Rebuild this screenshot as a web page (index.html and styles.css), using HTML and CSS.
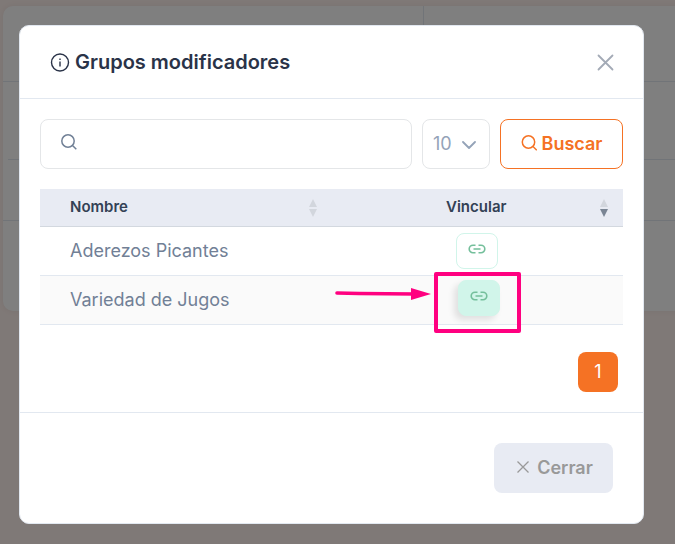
FILE: index.html
```html
<!DOCTYPE html>
<html lang="es">
<head>
    <meta charset="UTF-8">
    <meta name="viewport" content="width=device-width, initial-scale=1.0">
    <title>Grupos modificadores</title>
    <link rel="stylesheet" href="styles.css">
</head>
<body>
    <div class="page" aria-hidden="true">
        <div class="page-card">
            <div class="page-top"><div class="page-side"></div></div>
            <div class="page-tools"></div>
            <div class="page-row"></div>
        </div>
    </div>

    <div class="backdrop">
        <div class="modal" role="dialog" aria-labelledby="modal-title">
            <div class="modal-header">
                <h5 class="modal-title" id="modal-title">
                    <svg class="icon-info" viewBox="0 0 20 20" fill="none" stroke="currentColor" stroke-width="1.4">
                        <circle cx="10" cy="10.500" r="8.5"/>
                        <path d="M10 9.500v5M10 6.500V8"/>
                    </svg>
                    Grupos modificadores
                </h5>
                <button type="button" class="btn-close" aria-label="Cerrar ventana">
                    <svg viewBox="0 0 16 16" fill="none" stroke="currentColor" stroke-width="1.8" stroke-linecap="round">
                        <path d="M1.500 1.500l14 14M15.500 1.500l-14 14"/>
                    </svg>
                </button>
            </div>

            <div class="modal-body">
                <form class="filters">
                    <div class="search">
                        <svg class="icon-search" viewBox="0 0 16 16" fill="none" stroke="currentColor" stroke-width="1.5">
                            <circle cx="7" cy="7" r="6.2"/>
                            <path d="M11.5 11.5l3.8 3.8"/>
                        </svg>
                        <input type="text" class="search-input" aria-label="Buscar grupo">
                    </div>
                    <div class="length">
                        <select class="length-select" aria-label="Registros por página">
                            <option>10</option>
                            <option>25</option>
                            <option>50</option>
                        </select>
                        <svg class="icon-chevron" viewBox="0 0 14 8" fill="none" stroke="currentColor" stroke-width="1.8" stroke-linecap="round" stroke-linejoin="round">
                            <path d="M1 1l6 6 6-6"/>
                        </svg>
                    </div>
                    <button type="button" class="btn btn-search">
                        <svg class="icon-search" viewBox="0 0 16 16" fill="none" stroke="currentColor" stroke-width="1.5">
                            <circle cx="7.500" cy="7" r="6.2"/>
                            <path d="M12 11.5l3.8 3.8"/>
                        </svg>
                        Buscar
                    </button>
                </form>

                <table class="table">
                    <thead>
                        <tr>
                            <th>
                                <div class="th-inner">
                                    <span>Nombre</span>
                                    <svg class="sort" viewBox="0 0 8 18">
                                        <path class="sort-arrow" d="M4 0l4 8H0z"/>
                                        <path class="sort-arrow" d="M4 18l4-8H0z"/>
                                    </svg>
                                </div>
                            </th>
                            <th class="center">
                                <div class="th-inner">
                                    <span>Vincular</span>
                                    <svg class="sort" viewBox="0 0 8 18">
                                        <path class="sort-arrow" d="M4 0l4 8H0z"/>
                                        <path class="sort-arrow active" d="M4 18l4-8H0z"/>
                                    </svg>
                                </div>
                            </th>
                        </tr>
                    </thead>
                    <tbody>
                        <tr>
                            <td>Aderezos Picantes</td>
                            <td class="center">
                                <button type="button" class="btn-link" aria-label="Vincular Aderezos Picantes">
                                    <svg class="icon-link" viewBox="0 0 18 10" fill="none" stroke="currentColor" stroke-width="1.6">
                                        <path d="M7.5 1.2H5a3.8 3.8 0 0 0 0 7.6h2.5M10.5 1.2H13a3.8 3.8 0 0 1 0 7.6h-2.5M5.5 5h7"/>
                                    </svg>
                                </button>
                            </td>
                        </tr>
                        <tr>
                            <td>Variedad de Jugos</td>
                            <td class="center marked">
                                <button type="button" class="btn-link hover" aria-label="Vincular Variedad de Jugos">
                                    <svg class="icon-link" viewBox="0 0 18 10" fill="none" stroke="currentColor" stroke-width="1.6">
                                        <path d="M7.5 1.2H5a3.8 3.8 0 0 0 0 7.6h2.5M10.5 1.2H13a3.8 3.8 0 0 1 0 7.6h-2.5M5.5 5h7"/>
                                    </svg>
                                </button>
                                <!-- flecha y recuadro que señalan el botón -->
                                <svg class="mark" viewBox="0 0 190 64">
                                    <path d="M4 23L26 23.500L82 24" fill="none" stroke="#ff0080" stroke-width="3.600" stroke-linecap="round"/>
                                    <path d="M78 18l20 6-20 6z" fill="#ff0080"/>
                                    <rect x="103" y="4" width="83" height="57" fill="none" stroke="#ff0080" stroke-width="4" stroke-linejoin="round"/>
                                </svg>
                            </td>
                        </tr>
                    </tbody>
                </table>

                <nav class="pagination" aria-label="Paginación">
                    <a href="#" class="page-link">1</a>
                </nav>
            </div>

            <div class="modal-footer">
                <button type="button" class="btn btn-cancel">
                    <svg class="icon-x" viewBox="0 0 12 12" fill="none" stroke="currentColor" stroke-width="1.3">
                        <path d="M.5.5l11 11M11.500.5L.5 11.500"/>
                    </svg>
                    Cerrar
                </button>
            </div>
        </div>
    </div>
</body>
</html>
```

FILE: styles.css
```css
* {
    box-sizing: border-box;
}

body {
    margin: 0;
    min-height: 100vh;
    overflow: hidden;
    background: #fff2ee;
    font-family: Inter, 'Liberation Sans', sans-serif;
    font-size: 18px;
    color: #718096;
}

svg {
    display: block;
    flex: none;
}

/* contenido detrás de la ventana */
.page {
    padding: 6px 0 0 3px;
}

.page-card {
    margin-right: -20px;
    padding-bottom: 90px;
    background: #fff;
    border-radius: 10px;
    box-shadow: 0 0 6px rgba(0, 0, 0, 0.06);
}

.page-top {
    display: flex;
    justify-content: flex-end;
    height: 76px;
    border-bottom: 1px solid #e2e8f0;
}

.page-side {
    width: 272px;
    border-left: 1px solid #e2e8f0;
}

.page-tools {
    height: 78px;
    margin-left: 5px;
    border-bottom: 1px solid #e2e8f0;
}

.page-row {
    height: 61px;
    border-bottom: 1px solid #e2e8f0;
}

.backdrop {
    position: fixed;
    inset: 0;
    padding: 25px 31px 20px 19px;
    background: rgba(0, 0, 0, 0.5);
}

.modal {
    background: #fff;
    border: 1px solid #e2e8f0;
    border-radius: 10px;
}

.modal-header {
    display: flex;
    align-items: center;
    justify-content: space-between;
    height: 73px;
    padding: 0 30px;
    border-bottom: 1px solid #e2e8f0;
}

.modal-title {
    display: flex;
    align-items: center;
    gap: 5px;
    margin: 0;
    font-size: 20px;
    font-weight: 600;
    line-height: 24px;
    color: #2a3348;
}

.icon-info {
    width: 20px;
    height: 20px;
}

.btn-close {
    padding: 0;
    border: 0;
    background: none;
    color: #a3aab6;
    cursor: pointer;
}

.btn-close svg {
    width: 16px;
    height: 16px;
    overflow: visible;
}

.modal-body {
    padding: 20px;
}

.filters {
    display: flex;
    gap: 10px;
    margin-bottom: 20px;
}

.search {
    position: relative;
    flex: 1;
}

.search .icon-search {
    position: absolute;
    top: 15px;
    left: 21px;
    color: #718096;
}

.icon-search {
    width: 16px;
    height: 16px;
}

.search-input,
.length-select {
    width: 100%;
    height: 50px;
    border: 1px solid #e4e6e8;
    border-radius: 8px;
    background: #fff;
    font: inherit;
}

.search-input {
    padding: 0 20px 0 50px;
}

.length {
    position: relative;
    width: 68px;
}

.length-select {
    appearance: none;
    padding: 0 10px 2px;
    color: #94a3b8;
}

.icon-chevron {
    position: absolute;
    top: 22px;
    right: 14px;
    width: 14px;
    height: 8px;
    color: #94a3b8;
    pointer-events: none;
}

.btn {
    display: flex;
    align-items: center;
    justify-content: center;
    gap: 5px;
    height: 50px;
    padding: 0 20px 2px;
    border: 1px solid transparent;
    border-radius: 8px;
    font: inherit;
    font-weight: 600;
    cursor: pointer;
}

.btn-search {
    width: 123px;
    background: #fff;
    border-color: #f57224;
    color: #f57224;
}

.table {
    width: 100%;
    table-layout: fixed;
    border-collapse: separate;
    border-spacing: 0;
}

.table th {
    height: 38px;
    padding: 0 15px 0 30px;
    background: #e8ebf3;
    border-bottom: 1px solid #d3d8df;
    font-size: 15px;
    font-weight: 600;
    line-height: 20px;
    text-align: left;
    color: #334155;
}

.table th.center {
    padding-left: 21px;
}

.th-inner {
    display: flex;
    align-items: center;
    justify-content: space-between;
}

.th-inner span {
    padding-bottom: 2px;
}

.table th.center .th-inner span {
    flex: 1;
    text-align: center;
}

.sort {
    width: 8px;
    height: 18px;
}

.sort-arrow {
    fill: #d2d6dd;
}

.sort-arrow.active {
    fill: #7a8594;
}

.table td {
    height: 49px;
    padding: 0 30px 2px;
    border-bottom: 1px solid #e2e8f0;
}

.table td.center {
    padding-bottom: 0;
    text-align: center;
}

.table tbody tr:nth-child(even) {
    background: #fafafa;
}

.btn-link {
    display: inline-flex;
    justify-content: center;
    width: 42px;
    height: 36px;
    padding: 10px 0 0;
    border: 1px solid #d1f5ea;
    border-radius: 8px;
    background: #fff;
    color: #74bf9b;
    vertical-align: middle;
    cursor: pointer;
}

.btn-link:hover,
.btn-link.hover {
    background: #d1f5ea;
    box-shadow: -4px 4px 6px rgba(0, 0, 0, 0.1);
    transform: translate(2px, -2px);
}

.icon-link {
    width: 18px;
    height: 10px;
}

.marked {
    position: relative;
}

.mark {
    position: absolute;
    top: -6px;
    left: 1px;
    width: 190px;
    height: 64px;
    pointer-events: none;
}

.pagination {
    display: flex;
    justify-content: flex-end;
    padding: 27px 5px 0;
}

.page-link {
    width: 40px;
    border-radius: 8px;
    background: #f57224;
    color: #fff;
    line-height: 40px;
    text-align: center;
    text-decoration: none;
}

.modal-footer {
    display: flex;
    justify-content: flex-end;
    padding: 30px;
    border-top: 1px solid #e2e8f0;
}

.btn-cancel {
    gap: 8px;
    width: 119px;
    padding-right: 17px;
    background: #e8ebf3;
    color: #999;
}

.icon-x {
    width: 12px;
    height: 12px;
}
```
